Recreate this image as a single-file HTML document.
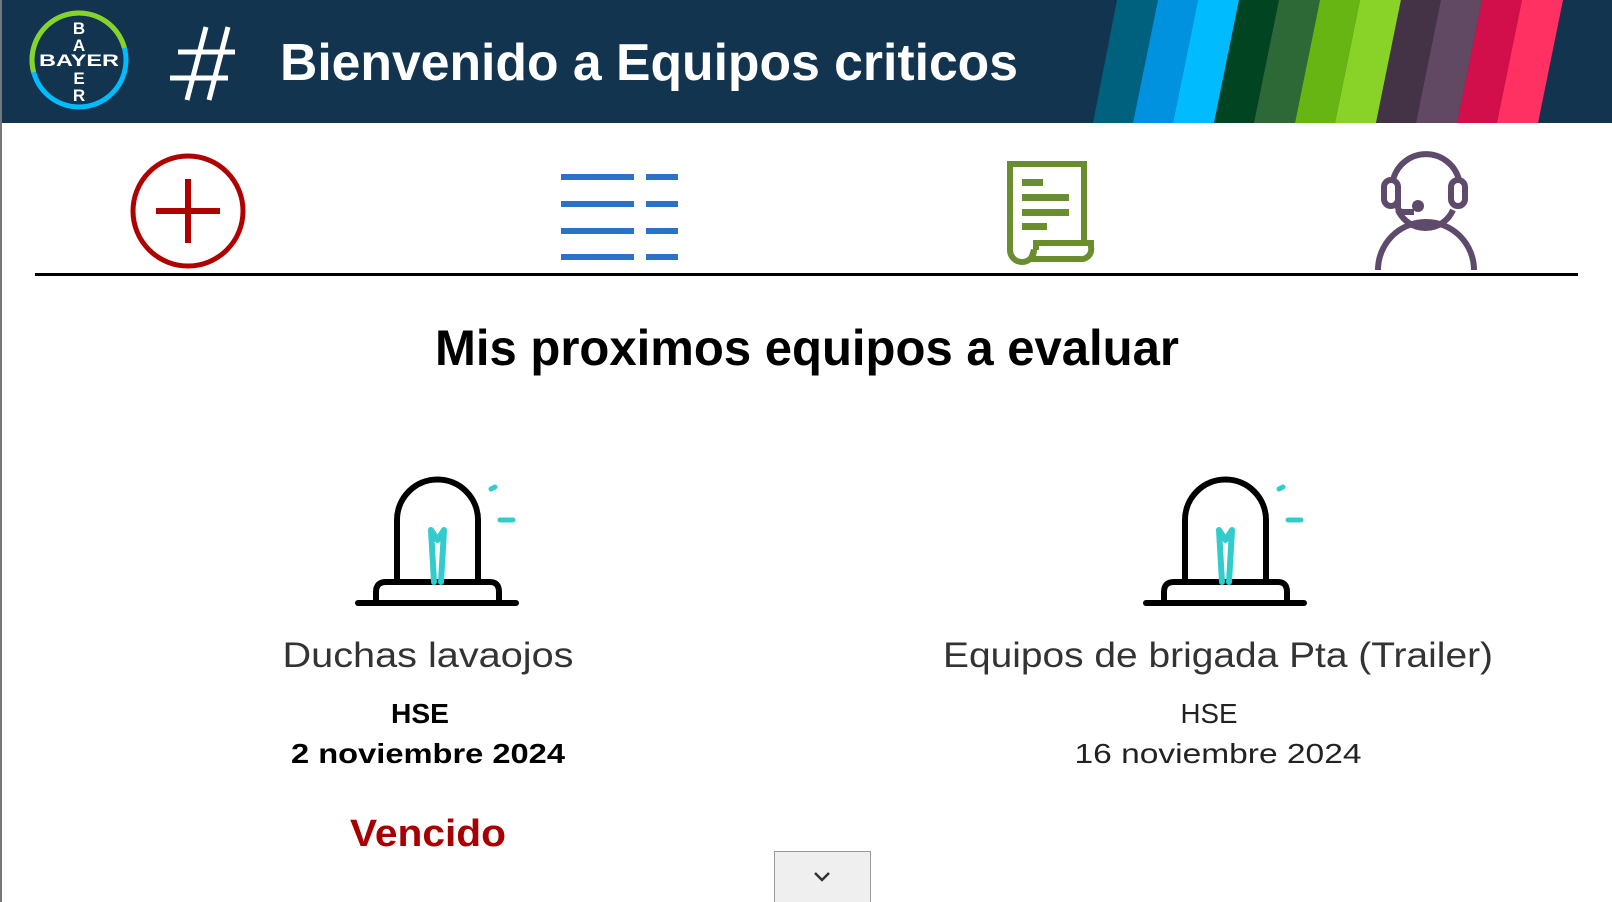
<!DOCTYPE html>
<html><head><meta charset="utf-8"><style>
html,body{margin:0;padding:0;width:1612px;height:902px;overflow:hidden;background:#fff}
svg{display:block}
text{font-family:"Liberation Sans",sans-serif}
</style></head><body>
<svg width="1612" height="902" viewBox="0 0 1612 902" xmlns="http://www.w3.org/2000/svg">
<rect x="0" y="0" width="1612" height="123" fill="#13344f"/>
<rect x="0" y="0" width="2" height="902" fill="#777"/>
<g>
<polygon points="1117,0 1158,0 1133,123 1093,123" fill="#00617f"/>
<polygon points="1158,0 1198,0 1173,123 1133,123" fill="#0091df"/>
<polygon points="1198,0 1239,0 1214,123 1173,123" fill="#00bcff"/>
<polygon points="1239,0 1279,0 1254,123 1214,123" fill="#004422"/>
<polygon points="1279,0 1320,0 1295,123 1254,123" fill="#2d6936"/>
<polygon points="1320,0 1360,0 1335,123 1295,123" fill="#66b512"/>
<polygon points="1360,0 1401,0 1376,123 1335,123" fill="#89d329"/>
<polygon points="1401,0 1441,0 1416,123 1376,123" fill="#443247"/>
<polygon points="1441,0 1482,0 1457,123 1416,123" fill="#624963"/>
<polygon points="1482,0 1522,0 1497,123 1457,123" fill="#d30f4b"/>
<polygon points="1522,0 1563,0 1538,123 1497,123" fill="#ff3162"/>
</g>
<!-- bayer logo -->
<circle cx="79" cy="60" r="47" fill="none" stroke="#00bcff" stroke-width="5"/>
<path d="M32,60 A47,47 0 0 1 126,60" fill="none" stroke="#89d329" stroke-width="5" transform="rotate(-15 79 60)"/>
<g fill="#fff" font-weight="bold" font-size="17" text-anchor="middle">
<text x="79" y="34">B</text><text x="79" y="51">A</text>
<text x="79" y="66" textLength="80" lengthAdjust="spacingAndGlyphs">BAYER</text>
<text x="79" y="84">E</text><text x="79" y="101">R</text>
</g>
<!-- hash -->
<g stroke="#fff" stroke-width="5" fill="none">
<line x1="206" y1="27" x2="187" y2="100"/><line x1="228" y1="27" x2="209" y2="100"/>
<line x1="178" y1="52" x2="235" y2="52"/><line x1="170" y1="78" x2="228" y2="78"/>
</g>
<text x="280" y="80" fill="#fff" font-weight="bold" font-size="52" textLength="738" lengthAdjust="spacingAndGlyphs">Bienvenido a Equipos criticos</text>
<!-- plus icon -->
<circle cx="188" cy="211" r="55" fill="none" stroke="#b00000" stroke-width="5"/>
<line x1="156" y1="211" x2="220" y2="211" stroke="#b00000" stroke-width="6"/>
<line x1="188" y1="179" x2="188" y2="243" stroke="#b00000" stroke-width="6"/>
<!-- list -->
<g fill="#2a72c6">
<rect x="561" y="174" width="73" height="6"/><rect x="646" y="174" width="32" height="6"/>
<rect x="561" y="201" width="73" height="6"/><rect x="646" y="201" width="32" height="6"/>
<rect x="561" y="228" width="73" height="6"/><rect x="646" y="228" width="32" height="6"/>
<rect x="561" y="254" width="73" height="6"/><rect x="646" y="254" width="32" height="6"/>
</g>
<!-- doc -->
<g fill="none" stroke="#6a8e2f" stroke-width="6">
<path d="M1084,243 V164 H1010 V250 A12,12 0 0 0 1034,250 L1031,259 H1080 A10,10 0 0 0 1091,247 V243 H1036 V250"/>
</g>
<g fill="#6a8e2f">
<rect x="1022" y="179" width="21" height="7"/><rect x="1022" y="194" width="47" height="7"/>
<rect x="1022" y="209" width="47" height="7"/><rect x="1022" y="223" width="25" height="7"/>
</g>
<!-- person -->
<g fill="none" stroke="#5e4a6a" stroke-width="6">
<path d="M1393,180 A34,34 0 0 1 1459,180"/>
<rect x="1384" y="180" width="14" height="26" rx="7"/>
<rect x="1451" y="180" width="14" height="26" rx="7"/>
<path d="M1398,210 A30,30 0 0 0 1453,210"/>
<path d="M1398,199 V207 Q1398,212 1404,212 H1414"/>
<path d="M1378,270 A48,48 0 0 1 1474,270"/>
</g>
<circle cx="1418" cy="206" r="6" fill="#5e4a6a"/>
<rect x="35" y="273" width="1543" height="3" fill="#000"/>
<text x="807" y="365" text-anchor="middle" font-weight="bold" font-size="50" textLength="744" lengthAdjust="spacingAndGlyphs">Mis proximos equipos a evaluar</text>
<!-- sirens -->
<g id="siren">
<path d="M397,582 V520 A40,40 0 0 1 478,520 V582" fill="none" stroke="#000" stroke-width="6"/>
<path d="M376,600 V592 Q376,582 386,582 H490 Q499,582 499,592 V600" fill="none" stroke="#000" stroke-width="6"/>
<line x1="358" y1="603" x2="516" y2="603" stroke="#000" stroke-width="6" stroke-linecap="round"/>
<path d="M431,530 L434,582 M444,530 L441,582 M431,530 L437.5,540 L444,530" fill="none" stroke="#33cccc" stroke-width="6" stroke-linecap="round" stroke-linejoin="round"/>
<line x1="500" y1="520" x2="513" y2="520" stroke="#33cccc" stroke-width="5" stroke-linecap="round"/>
<line x1="491" y1="489" x2="495" y2="487" stroke="#33cccc" stroke-width="5" stroke-linecap="round"/>
</g>
<use href="#siren" transform="translate(788 0)"/>
<text x="428" y="667" text-anchor="middle" fill="#333" font-size="35" textLength="291" lengthAdjust="spacingAndGlyphs">Duchas lavaojos</text>
<text x="420" y="723" text-anchor="middle" font-weight="bold" font-size="28" textLength="58" lengthAdjust="spacingAndGlyphs">HSE</text>
<text x="428" y="763" text-anchor="middle" font-weight="bold" font-size="28" textLength="274" lengthAdjust="spacingAndGlyphs">2 noviembre 2024</text>
<text x="428" y="846" text-anchor="middle" fill="#a80000" font-weight="bold" font-size="38" textLength="156" lengthAdjust="spacingAndGlyphs">Vencido</text>
<text x="1218" y="667" text-anchor="middle" fill="#333" font-size="35" textLength="550" lengthAdjust="spacingAndGlyphs">Equipos de brigada Pta (Trailer)</text>
<text x="1209" y="723" text-anchor="middle" fill="#222" font-size="28" textLength="57" lengthAdjust="spacingAndGlyphs">HSE</text>
<text x="1218" y="763" text-anchor="middle" fill="#222" font-size="28" textLength="287" lengthAdjust="spacingAndGlyphs">16 noviembre 2024</text>
<!-- button -->
<rect x="774.5" y="851.5" width="96" height="60" fill="#efefef" stroke="#999"/>
<path d="M815,873 L822,880 L829,873" fill="none" stroke="#333" stroke-width="2.5"/>
</svg>
</body></html>
